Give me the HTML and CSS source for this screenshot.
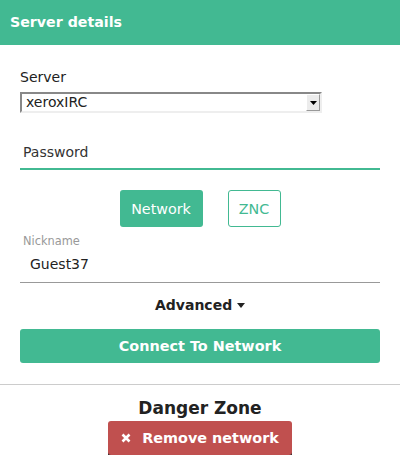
FILE: index.html
```html
<!DOCTYPE html>
<html>
<head>
<meta charset="utf-8">
<link rel="stylesheet" href="styles.css">
</head>
<body>
<div class="header">Server details</div>
<div class="content">
  <div class="label">Server</div>
  <div class="select">
    <span class="select-text">xeroxIRC</span>
    <span class="select-arrow"><svg width="7" height="4" viewBox="0 0 7 4"><path d="M0 0H7L3.5 4Z" fill="#000"/></svg></span>
  </div>
  <div class="password">Password</div>
  <div class="tabs">
    <span class="tab tab-active">Network</span>
    <span class="tab tab-outline">ZNC</span>
  </div>
  <div class="nick">
    <div class="nick-label">Nickname</div>
    <div class="nick-value">Guest37</div>
  </div>
  <div class="advanced">Advanced <svg width="8" height="5" viewBox="0 0 8 5"><path d="M0 0H8L4 5Z" fill="#222"/></svg></div>
  <div class="connect">Connect To Network</div>
</div>
<div class="sep"></div>
<div class="danger">
  <div class="danger-title">Danger Zone</div>
  <div class="remove"><svg width="10" height="10" viewBox="0 0 10 10"><path d="M1.5 1.5L8.5 8.5M8.5 1.5L1.5 8.5" stroke="#fff" stroke-width="2.6"/></svg><span>Remove network</span></div>
</div>
</body>
</html>
```
FILE: styles.css
```css
html, body { margin: 0; padding: 0; background: #fff; }
body { font-family: "DejaVu Sans", sans-serif; color: #222; width: 400px; }
.header {
  background: #42b992;
  color: #fff;
  font-weight: bold;
  font-size: 14.2px;
  height: 45px;
  line-height: 45px;
  padding-left: 10px;
}
.content { padding: 0 20px; }
.label { font-size: 14px; margin-top: 24px; line-height: 17px; color: #222; }
.select {
  margin-top: 6px;
  width: 302px;
  height: 21px;
  box-sizing: border-box;
  border: 2px solid;
  border-color: #888 #eee #eee #888;
  display: flex;
  align-items: center;
  background: #fff;
  position: relative;
}
.select-text { font-size: 14px; padding-left: 4px; flex: 1; line-height: 17px; }
.select-arrow {
  width: 14px;
  height: 17px;
  box-sizing: border-box;
  border: 1px solid;
  border-color: #fff #999 #999 #fff;
  background: #ececec;
  display: flex;
  align-items: center;
  justify-content: center;
}
.password {
  margin-top: 31px;
  font-size: 14px;
  color: #333;
  padding-left: 3px;
  line-height: 17px;
  padding-bottom: 7px;
  border-bottom: 2px solid #42b992;
}
.tabs { display: flex; justify-content: center; gap: 25px; margin-top: 20px; }
.tab {
  height: 37px;
  box-sizing: border-box;
  border-radius: 3px;
  font-size: 14.3px;
  display: flex;
  align-items: center;
  justify-content: center;
}
.tab-active { background: #42b992; color: #fff; width: 83px; }
.tab-outline { border: 1px solid #42b992; color: #42b992; width: 53px; }
.nick { border-bottom: 1px solid #999; padding-bottom: 9px; margin-top: 8px; }
.nick-label { font-size: 11.4px; color: #999; padding-left: 3px; line-height: 13px; }
.nick-value { font-size: 14px; padding-left: 10px; margin-top: 8px; line-height: 17px; color: #222; }
.advanced {
  text-align: center;
  font-weight: bold;
  font-size: 14px;
  margin-top: 14px;
  line-height: 17px;
}
.advanced svg { vertical-align: 2px; }
.connect {
  margin-top: 15px;
  height: 34px;
  background: #42b992;
  color: #fff;
  border-radius: 3px;
  font-weight: bold;
  font-size: 14.4px;
  display: flex;
  align-items: center;
  justify-content: center;
}
.sep { height: 1px; background: #ccc; margin-top: 21px; }
.danger { display: flex; flex-direction: column; align-items: center; }
.danger-title { font-weight: bold; font-size: 17px; margin-top: 13px; line-height: 20px; color: #222; }
.remove {
  margin-top: 3px;
  width: 184px;
  height: 34px;
  background: #c0504f;
  border-radius: 3px;
  box-shadow: 0 2px 0 #333;
  color: #fff;
  font-weight: bold;
  font-size: 14.4px;
  display: flex;
  align-items: center;
  justify-content: center;
  gap: 11px;
}
```
